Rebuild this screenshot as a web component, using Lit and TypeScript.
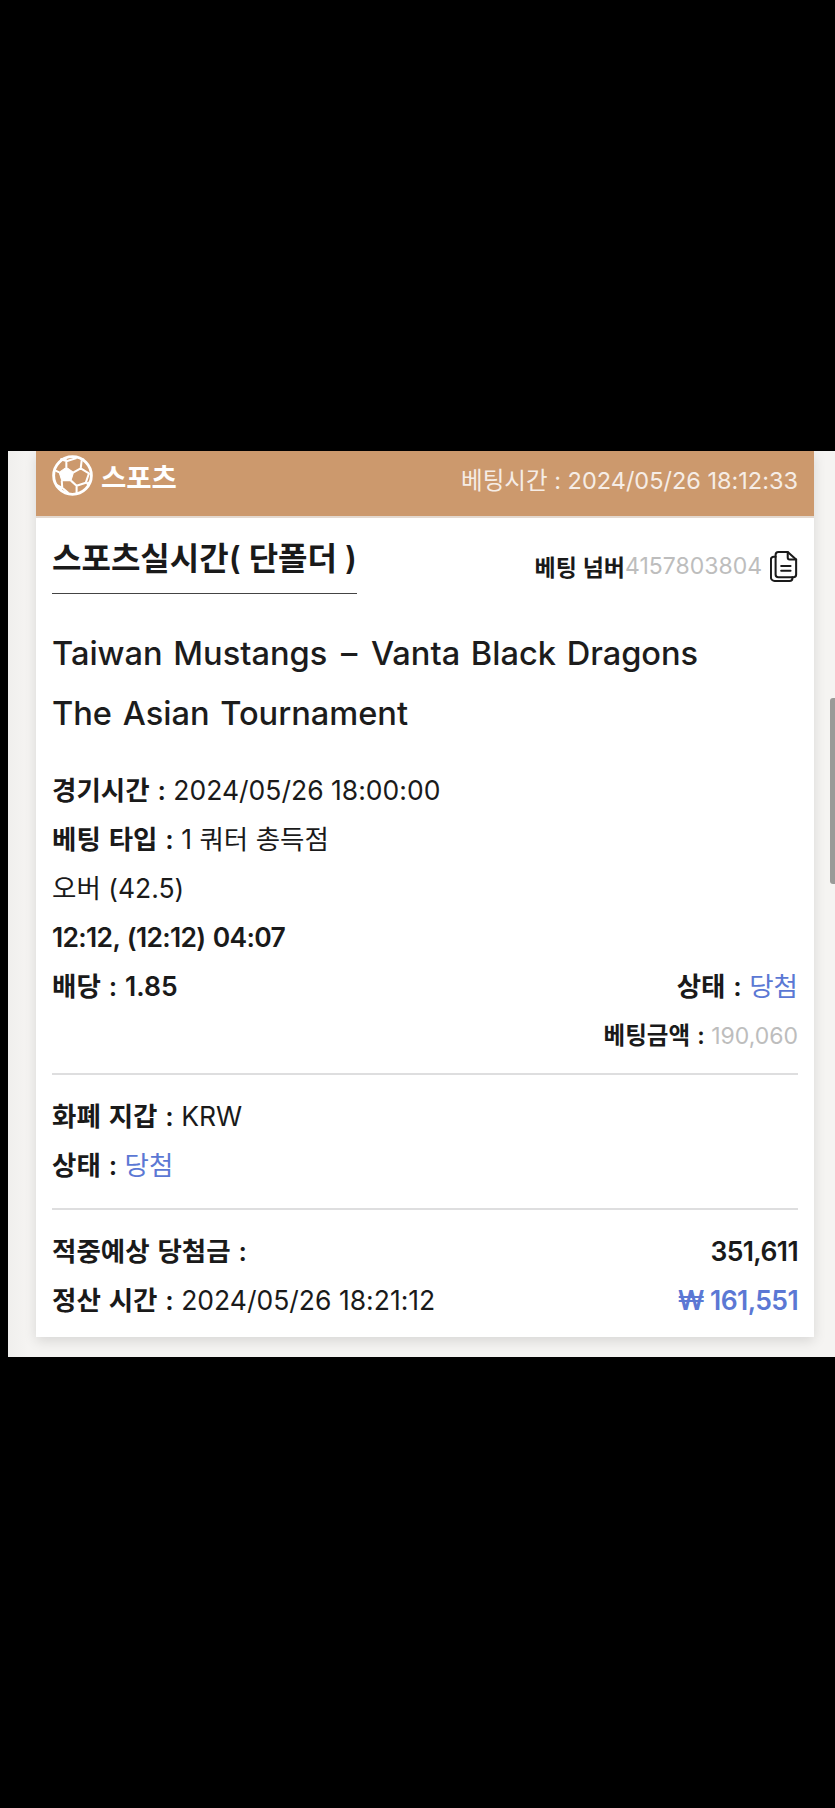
import { LitElement, html, css } from "lit";
import { customElement } from "lit/decorators.js";

@customElement("app-root")
export class AppRoot extends LitElement {
  static styles = css`
    :host {
      display: block;
      position: relative;
      width: 835px;
      height: 1808px;
      background: #000;
      overflow: hidden;
      font-family: "Inter", "Noto Sans CJK KR", sans-serif;
      color: #1a1a1a;
    }
    .page {
      margin: 451px 0 0 8px;
      height: 906px;
      box-sizing: border-box;
      padding: 0 21px 20px 28px;
      background: linear-gradient(90deg, #f0efed, #f5f4f2 20px);
    }
    .card {
      height: 100%;
      box-sizing: border-box;
      background: #fff;
      box-shadow: 0 4px 12px rgba(0, 0, 0, 0.12);
    }
    .head {
      height: 67px;
      box-sizing: border-box;
      display: flex;
      align-items: center;
      justify-content: space-between;
      padding: 0 16px 0 16px;
      background: #cc996d;
      border-bottom: 2px solid #e3d9d0;
      color: #fff;
    }
    .sport { display: flex; align-items: center; gap: 8px; font-size: 27.5px; font-weight: 600; margin-top: -16px; }
    .sport svg { width: 41px; height: 41px; display: block; }
    .bettime { font-size: 23.5px; color: #f6ede6; margin-top: -10px; }
    .body { padding: 0 16px; }
    .titlerow { display: flex; justify-content: space-between; align-items: flex-start; height: 76px; }
    .title {
      font-size: 32px;
      font-weight: 600;
      height: 76px;
      box-sizing: border-box;
      line-height: 81px;
      border-bottom: 1px solid #444;
    }
    .num { display: flex; align-items: center; font-size: 23px; font-weight: 600; height: 96px; }
    .num .g { color: #bdbdbd; font-weight: 400; }
    .num svg { width: 28px; height: 32px; margin-left: 8px; display: block; }
    .match { font-size: 32.6px; word-spacing: 2px; font-weight: 500; line-height: 60px; margin-top: 29px; color: #1c1c1c; }
    .dash { margin: 0 3px; }
    .lines { margin-top: 23px; font-size: 26.5px; line-height: 49px; }
    .row { display: flex; justify-content: space-between; }
    b { font-weight: 600; word-spacing: 1.2px; }
    .tight { letter-spacing: -0.7px; }
    .blue { color: #5b78d4; }
    .small { justify-content: flex-end; font-size: 23px; }
    .small b { font-size: 23.5px; }
    .g { color: #bdbdbd; }
    .s2 { margin-top: 12px; padding-top: 17px; border-top: 2px solid #dededf; font-size: 26.5px; line-height: 49px; }
    .s3 { margin-top: 18px; padding-top: 17px; border-top: 2px solid #dededf; font-size: 26.5px; line-height: 49px; }
    .amt { font-weight: 600; letter-spacing: -0.6px; }
    .scroll {
      position: absolute;
      left: 830px;
      top: 698px;
      width: 8px;
      height: 186px;
      border-radius: 3px;
      background: #9a9a98;
    }
  `;

  render() {
    return html`
      <div class="page">
        <div class="card">
          <div class="head">
            <div class="sport">
              <svg viewBox="0 0 40 40" fill="none" stroke="#fff" stroke-width="2" stroke-linejoin="round">
                <circle cx="20" cy="20" r="18.4" stroke-width="2.8" />
                <path fill="#fff" stroke-width="1" d="M14 12l7 5-2.5 8h-9L7 17z" />
                <path d="M14 12V6l10-3M14 6L8 4M21 17l7-4 1-8M28 13l8 5M18.5 25l5.5 5 9-3 3-9M24 30v7M9.500 25l.5 7-6-3M10 32l6 5M7 17l-4-2" />
                <path fill="#fff" stroke="none" d="M8 3.500l6 2.500 1-4zM24 2l5 3 3-1zM36 18l3-2 0 6zM33 27l5-2-3 6zM24 37l6-1-6 3zM10 32l-4 0 3 4z" />
              </svg>
              <span>스포츠</span>
            </div>
            <div class="bettime">베팅시간 : 2024/05/26 18:12:33</div>
          </div>
          <div class="body">
            <div class="titlerow">
              <div class="title">스포츠실시간( 단폴더 )</div>
              <div class="num">
                <span>베팅 넘버</span><span class="g">4157803804</span>
                <svg viewBox="0 0 30 34" fill="none" stroke="#1a1a1a" stroke-width="2.200" stroke-linejoin="round" stroke-linecap="round">
                  <path d="M9 2h10l9 8v16a3 3 0 0 1-3 3H9a3 3 0 0 1-3-3V5a3 3 0 0 1 3-3z" />
                  <path d="M19 2v6a2 2 0 0 0 2 2h7" />
                  <path d="M6 7H4a3 3 0 0 0-3 3v19a4 4 0 0 0 4 4h16a3 3 0 0 0 3-3v-1" />
                  <path d="M12 17h10M12 22h10" />
                </svg>
              </div>
            </div>
            <div class="match">Taiwan Mustangs <span class="dash">–</span> Vanta Black Dragons<br />The Asian Tournament</div>
            <div class="lines">
              <div><b>경기시간 :</b> 2024/05/26 18:00:00</div>
              <div><b>베팅 타입 :</b> 1 쿼터 총득점</div>
              <div>오버 (42.5)</div>
              <div><b class="tight">12:12, (12:12) 04:07</b></div>
              <div class="row"><b>배당 : 1.85</b><span><b>상태 :</b> <span class="blue">당첨</span></span></div>
              <div class="row small"><span><b>베팅금액 :</b> <span class="g">190,060</span></span></div>
            </div>
            <div class="s2">
              <div><b>화폐 지갑 :</b> KRW</div>
              <div><b>상태 :</b> <span class="blue">당첨</span></div>
            </div>
            <div class="s3">
              <div class="row"><b>적중예상 당첨금 :</b><span class="amt">351,611</span></div>
              <div class="row"><span><b>정산 시간 :</b> 2024/05/26 18:21:12</span><span class="amt blue">₩ 161,551</span></div>
            </div>
          </div>
        </div>
      </div>
      <div class="scroll"></div>
    `;
  }
}
